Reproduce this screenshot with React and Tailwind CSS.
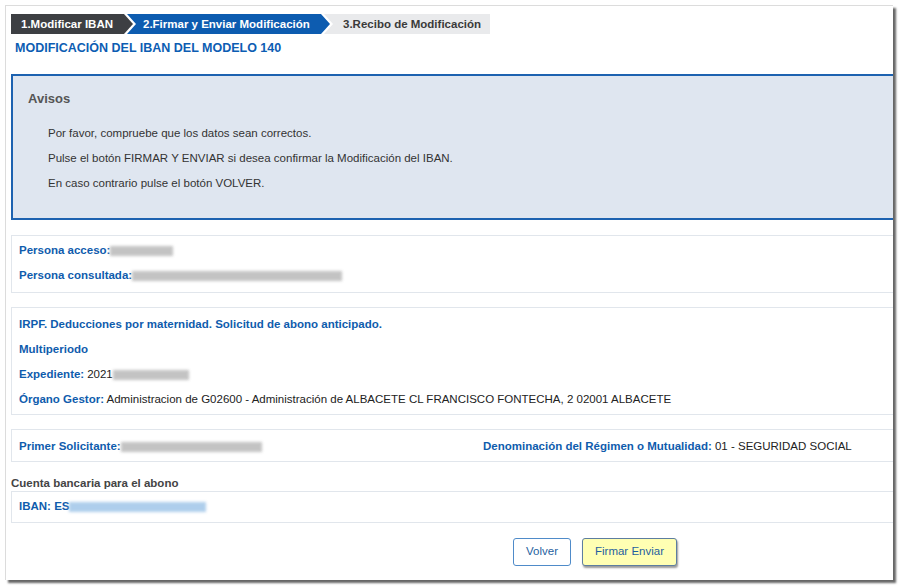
import React from "react";

function Label({ children }) {
  return <span className="font-bold text-[#0f5cad]">{children}</span>;
}

function Blur({ w, blue }) {
  return (
    <span
      className={`inline-block align-middle h-[10px] ${w} ${
        blue ? "bg-[#a6c9ea]" : "bg-[#bdbdbd]"
      } blur-[1.5px] opacity-90`}
    />
  );
}

export default function App() {
  return (
    <div
      className="w-[900px] h-[586px] bg-white overflow-hidden pt-[5px] pl-[5px]"
      style={{ fontFamily: '"Liberation Sans", Arial, sans-serif' }}
    >
      <div className="w-[888px] h-[575px] bg-white border-l border-t border-[#dcdcdc] shadow-[3px_3px_2px_rgba(0,0,0,0.6)] overflow-hidden pl-[5px]">
        {/* steps */}
        <div className="flex mt-[8px] h-[20px] text-[11.5px] font-bold leading-[20px]">
          <div className="w-[122px] shrink-0 bg-[#3d3f43] text-white pl-[10px] [clip-path:polygon(0_0,calc(100%-9px)_0,100%_50%,calc(100%-9px)_100%,0_100%)]">
            1.Modificar IBAN
          </div>
          <div className="w-[203px] shrink-0 -ml-[6px] bg-[#0d5cb0] text-white pl-[16px] [clip-path:polygon(0_0,calc(100%-9px)_0,100%_50%,calc(100%-9px)_100%,0_100%,9px_50%)]">
            2.Firmar y Enviar Modificación
          </div>
          <div className="w-[166px] shrink-0 -ml-[6px] bg-[#e9eaec] text-[#3a3a3a] pl-[19px] [clip-path:polygon(0_0,100%_0,100%_100%,0_100%,9px_50%)]">
            3.Recibo de Modificación
          </div>
        </div>

        {/* title */}
        <div className="mt-[4px] pl-[4px] h-[20px] leading-[20px] text-[12.5px] font-bold text-[#0c5db3]">
          MODIFICACIÓN DEL IBAN DEL MODELO 140
        </div>

        {/* avisos */}
        <div className="mt-[16px] -mr-[20px] border-2 border-[#1d62b0] bg-[#dfe6f0] pt-[15px] pb-[22px] pl-[15px]">
          <div className="h-[16px] leading-[16px] text-[13px] font-bold text-[#555]">
            Avisos
          </div>
          <div className="mt-[14px] pl-[20px] text-[11.5px] text-[#333]">
            <p className="h-[25px] leading-[25px]">
              Por favor, compruebe que los datos sean correctos.
            </p>
            <p className="h-[25px] leading-[25px]">
              Pulse el botón FIRMAR Y ENVIAR si desea confirmar la Modificación
              del IBAN.
            </p>
            <p className="h-[25px] leading-[25px]">
              En caso contrario pulse el botón VOLVER.
            </p>
          </div>
        </div>

        {/* persona */}
        <div className="mt-[15px] -mr-[20px] border border-[#e1e6ec] pt-[2px] pb-[4px] pl-[7px] text-[11.5px] text-[#222]">
          <div className="h-[25px] leading-[25px] flex items-center">
            <Label>Persona acceso:</Label>
            <Blur w="w-[63px]" />
          </div>
          <div className="h-[25px] leading-[25px] flex items-center">
            <Label>Persona consultada:</Label>
            <Blur w="w-[210px]" />
          </div>
        </div>

        {/* expediente */}
        <div className="mt-[14px] -mr-[20px] border border-[#e1e6ec] pt-[4px] pb-[2px] pl-[7px] text-[11.5px] text-[#222]">
          <div className="h-[25px] leading-[25px]">
            <Label>IRPF. Deducciones por maternidad. Solicitud de abono anticipado.</Label>
          </div>
          <div className="h-[25px] leading-[25px]">
            <Label>Multiperiodo</Label>
          </div>
          <div className="h-[25px] leading-[25px] flex items-center">
            <Label>Expediente:</Label>
            <span className="ml-[3px]">2021</span>
            <Blur w="w-[76px]" />
          </div>
          <div className="h-[25px] leading-[25px]">
            <Label>Órgano Gestor:</Label> Administracion de G02600 - Administración
            de ALBACETE CL FRANCISCO FONTECHA, 2 02001 ALBACETE
          </div>
        </div>

        {/* solicitante */}
        <div className="mt-[14px] -mr-[20px] border border-[#e1e6ec] pt-[4px] pb-[2px] pl-[7px] text-[11.5px] text-[#222] flex">
          <div className="w-[464px] h-[25px] flex items-center">
            <Label>Primer Solicitante:</Label>
            <Blur w="w-[141px]" />
          </div>
          <div className="h-[25px] leading-[25px]">
            <Label>Denominación del Régimen o Mutualidad:</Label> 01 - SEGURIDAD
            SOCIAL
          </div>
        </div>

        {/* cuenta */}
        <div className="mt-[13px] h-[16px] leading-[16px] text-[11.5px] font-bold text-[#444]">
          Cuenta bancaria para el abono
        </div>
        <div className="-mr-[20px] h-[32px] border border-[#e1e6ec] pl-[7px] text-[11.5px] flex items-center">
          <Label>IBAN: ES</Label>
          <Blur w="w-[137px]" blue />
        </div>

        {/* buttons */}
        <div className="mt-[15px] flex gap-[11px] pl-[502px] text-[11.5px]">
          <button className="w-[58px] h-[28px] bg-white border border-[#4f8bc9] rounded-[3px] text-[#1f5fa0]">
            Volver
          </button>
          <button className="w-[95px] h-[28px] bg-[#ffffb3] border border-[#5d7ea0] rounded-[3px] text-[#1f5fa0] shadow-[1px_2px_2px_rgba(0,0,0,0.4)]">
            Firmar Enviar
          </button>
        </div>
      </div>
    </div>
  );
}
